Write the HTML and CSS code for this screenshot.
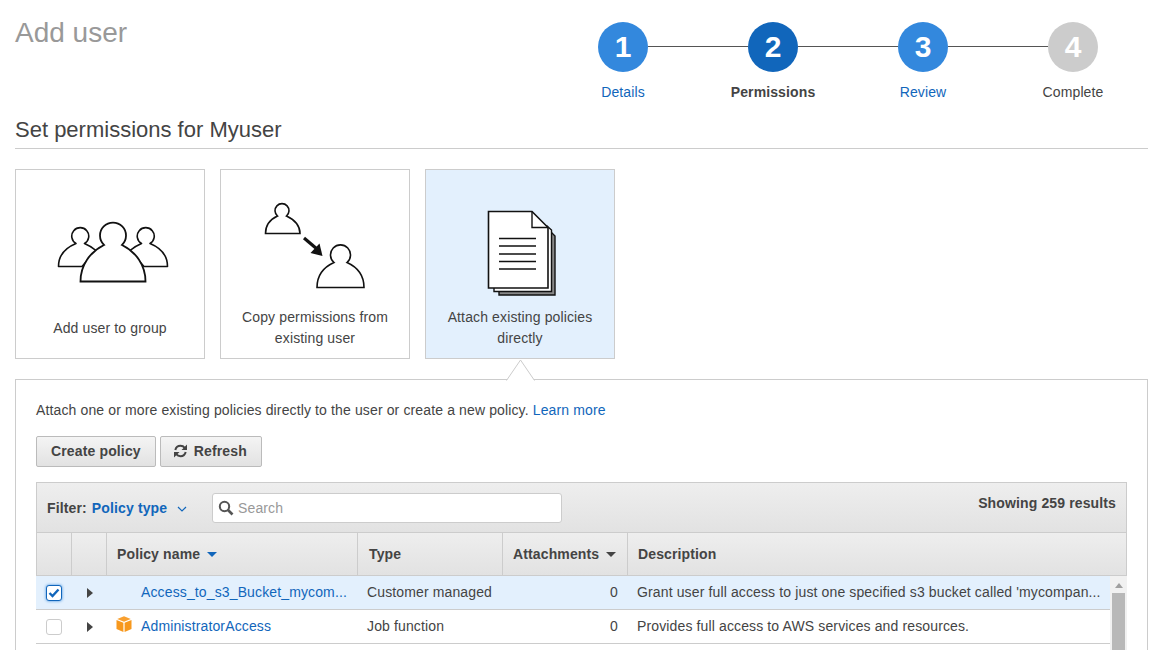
FILE: index.html
```html
<!DOCTYPE html>
<html lang="en">
<head>
<meta charset="utf-8">
<title>Add user</title>
<link rel="stylesheet" href="styles.css">
</head>
<body>
<div class="page">
  <header class="top">
    <h1 class="title">Add user</h1>
    <ol class="steps">
      <li class="step link"><span class="dot">1</span><span class="step-label">Details</span></li>
      <li class="step current"><span class="dot">2</span><span class="step-label">Permissions</span></li>
      <li class="step link"><span class="dot">3</span><span class="step-label">Review</span></li>
      <li class="step todo"><span class="dot">4</span><span class="step-label">Complete</span></li>
    </ol>
  </header>
  <h2 class="section">Set permissions for Myuser</h2>
  <div class="cards">
    <div class="card">
      <div class="card-art card-art-group">
        <svg class="art" width="112" height="62" viewBox="0 0 112 62">
          <path d="M1.500 45.500C1.500 35 8 27 19 22.500A8.500 8.500 0 1 1 27.500 22.500C31 24 35 26 39 29.500L25 45.500Z" fill="#fff" stroke="#111" stroke-width="1.600" stroke-linejoin="round"/>
          <path d="M110.500 45.500C110.500 35 104 27 93 22.500A8.500 8.500 0 1 0 84.500 22.500C81 24 77 26 73 29.500L87 45.500Z" fill="#fff" stroke="#111" stroke-width="1.600" stroke-linejoin="round"/>
          <path d="M23.500 60.500C23.500 44 33 31 47 24A13 13 0 1 1 65 24C79 31 88.500 44 88.500 60.500Z" fill="#fff" stroke="#111" stroke-width="1.800"/>
        </svg>
      </div>
      <p class="card-text">Add user to group</p>
    </div>
    <div class="card">
      <div class="card-art card-art-copy">
        <svg class="art" width="102" height="88" viewBox="0 0 102 88">
          <path d="M1.500 32.500C1.500 24 6 18.500 13.500 15A7 7 0 1 1 22.500 15C30 18.500 36 24 36 32.500Z" fill="#fff" stroke="#111" stroke-width="1.600"/>
          <path d="M53 86.500C53 74 60 66 70 61.500A10 10 0 1 1 83 61.500C93 66 100 74 100 86.500Z" fill="#fff" stroke="#111" stroke-width="1.600"/>
          <path d="M40 37L53 48" fill="none" stroke="#111" stroke-width="3.200"/>
          <path d="M58.500 55L46.500 52L55.500 42.500Z" fill="#111"/>
        </svg>
      </div>
      <p class="card-text">Copy permissions from existing user</p>
    </div>
    <div class="card selected">
      <div class="card-art card-art-doc">
        <svg class="art" width="70" height="86" viewBox="0 0 70 86">
          <path d="M12 85H68V26L60 18H12Z" fill="#888" stroke="#111" stroke-width="1.400"/>
          <path d="M7 81.500H64.500V20L60 16H7Z" fill="#fff" stroke="#111" stroke-width="1.400"/>
          <path d="M1.500 1.500H45L61 17.500V78H1.500Z" fill="#fff" stroke="#111" stroke-width="1.600"/>
          <path d="M45 1.500V17.500H61" fill="none" stroke="#111" stroke-width="1.400"/>
          <path d="M12 28.500H49M12 36H49M12 44H49M12 51.500H49M12 59H49" fill="none" stroke="#111" stroke-width="1.500"/>
        </svg>
      </div>
      <p class="card-text">Attach existing policies directly</p>
    </div>
  </div>
  <section class="panel">
    <svg class="caret" width="32" height="22" viewBox="0 0 32 22"><path d="M0.500 21.500L14.500 1L28.500 21.500" fill="#fff" stroke="#ccc"/></svg>
    <p class="intro">Attach one or more existing policies directly to the user or create a new policy. <a class="lnk" href="#">Learn more</a></p>
    <div class="actions">
      <button class="btn">Create policy</button>
      <button class="btn">
        <svg class="refresh" width="15" height="14" viewBox="0 0 15 14"><path d="M2.300 6C3 3.200 5 1.800 7.500 1.800C9.300 1.800 10.700 2.500 11.800 3.800M12.700 8C12 10.800 10 12.200 7.500 12.200C5.700 12.200 4.300 11.500 3.200 10.200" fill="none" stroke="#444" stroke-width="2"/><path d="M14 0.500V6H8.500ZM1 13.500V8H6.500Z" fill="#444"/></svg>
        Refresh
      </button>
    </div>
    <div class="table">
      <div class="filterbar">
        <span class="filter"><b class="filter-key">Filter:</b> <a class="filter-val" href="#">Policy type</a>
          <svg class="chev" width="10" height="6" viewBox="0 0 10 6"><path d="M1 1L5 5L9 1" fill="none" stroke="#1166bb" stroke-width="1.200"/></svg>
        </span>
        <label class="search">
          <svg width="16" height="16" viewBox="0 0 16 16"><circle cx="6.500" cy="6.500" r="4.700" fill="none" stroke="#555" stroke-width="2"/><path d="M10 10L14.500 14.500" stroke="#555" stroke-width="2.600"/></svg>
          <span class="placeholder">Search</span>
        </label>
        <span class="count">Showing 259 results</span>
      </div>
      <div class="head-cols thead">
        <div class="th"></div>
        <div class="th"></div>
        <div class="th">Policy name <i class="sort blue"></i></div>
        <div class="th th-type">Type</div>
        <div class="th">Attachments <i class="sort"></i></div>
        <div class="th last">Description</div>
      </div>
      <div class="tbody">
        <div class="rows">
          <div class="cols row on">
            <div class="td"><span class="check checked"><svg width="12" height="10" viewBox="0 0 12 10"><path d="M1.500 5L4.500 8L10.500 1.500" fill="none" stroke="#1166bb" stroke-width="2.400"/></svg></span></div>
            <div class="td"><i class="tri"></i></div>
            <div class="td policy"><a class="lnk" href="#">Access_to_s3_Bucket_mycom...</a></div>
            <div class="td">Customer managed</div>
            <div class="td num">0</div>
            <div class="td desc">Grant user full access to just one specified s3 bucket called 'mycompan...</div>
          </div>
          <div class="cols row">
            <div class="td"><span class="check"></span></div>
            <div class="td"><i class="tri"></i></div>
            <div class="td policy"><svg class="box" width="16" height="16" viewBox="0 0 16 16"><path d="M8 0.300L14.800 3L8 5.700L1.200 3Z" fill="#f9a030"/><path d="M0.500 4L7.400 6.800V16L0.500 13ZM15.500 4L8.600 6.800V16L15.500 13Z" fill="#f7981d"/></svg><a class="lnk" href="#">AdministratorAccess</a></div>
            <div class="td">Job function</div>
            <div class="td num">0</div>
            <div class="td desc">Provides full access to AWS services and resources.</div>
          </div>
        </div>
        <div class="scrollbar"><i class="up"></i><i class="thumb"></i></div>
      </div>
    </div>
  </section>
</div>
</body>
</html>
```
FILE: styles.css
```css
* { box-sizing: border-box; }
html, body { margin: 0; height: 650px; overflow: hidden; background: #fff; }
body { font: 14px/20px "Liberation Sans", Arial, sans-serif; letter-spacing: 0.13px; color: #444; }
.page { padding: 0 20px 0 15px; }
a { text-decoration: none; }
.lnk { color: #1166bb; }

.top { display: flex; justify-content: space-between; height: 112px; padding-top: 15px; }
.title { margin: 0; font-size: 28px; line-height: 36px; font-weight: 400; letter-spacing: 0; color: #999; }
.steps { display: flex; margin: 7px 0 0; padding: 0; list-style: none; width: 600px; }
.step { position: relative; width: 150px; display: flex; flex-direction: column; align-items: center; }
.step::after { content: ""; position: absolute; left: 100px; top: 24px; width: 100px; height: 1px; background: #555; }
.step:last-child::after { display: none; }
.dot { width: 50px; height: 50px; border-radius: 50%; color: #fff; font-size: 30px; font-weight: 700; line-height: 50px; text-align: center; letter-spacing: 0; }
.step-label { margin-top: 10px; line-height: 20px; }
.link .dot { background: #3388dd; }
.link .step-label { color: #1166bb; }
.current .dot { background: #1166bb; }
.current .step-label { font-weight: 700; letter-spacing: 0.12px; }
.todo .dot { background: #ccc; }

.section { margin: 0; font-size: 22px; line-height: 36px; font-weight: 400; letter-spacing: 0; border-bottom: 1px solid #ccc; height: 37px; }

.cards { display: flex; gap: 15px; margin-top: 20px; }
.card { width: 190px; height: 190px; border: 1px solid #ccc; display: flex; flex-direction: column; align-items: center; padding: 0 15px; text-align: center; }
.card.selected { background: #e3f0fd; }
.card-art { display: flex; justify-content: center; }
.card-art-group { height: 148px; padding-top: 51px; margin-left: 6px; }
.card-art-copy { height: 137px; padding-top: 31px; }
.card-art-doc { height: 137px; padding-top: 40px; margin-left: 4px; }
.art { display: block; flex: none; }
.card-text { margin: 0; line-height: 21px; }

.panel { position: relative; margin-top: 20px; border: 1px solid #ccc; padding: 20px; height: 300px; }
.caret { position: absolute; top: -21px; left: 490px; }
.intro { margin: 0; line-height: 20px; }
.actions { display: flex; gap: 4px; margin-top: 16px; }
.btn { height: 31px; padding: 0 14px 2px; border: 1px solid #bbb; border-radius: 2px; background: linear-gradient(#f4f4f4, #e2e2e2); font: 700 14px "Liberation Sans", Arial, sans-serif; letter-spacing: 0.14px; color: #444; display: flex; align-items: center; gap: 6px; }
.btn .refresh { flex: none; margin-left: -2px; margin-top: 1px; }

.table { margin-top: 15px; }
.filterbar { height: 51px; border: 1px solid #ccc; background: linear-gradient(#eee, #e2e2e2); display: flex; padding: 10px 10px 0; }
.filter { width: 165px; line-height: 30px; white-space: nowrap; }
.filter-val { color: #1166bb; font-weight: 700; margin-left: 1px; }
.chev { margin-left: 6px; vertical-align: 1px; }
.search { width: 350px; height: 30px; background: #fff; border: 1px solid #ccc; border-radius: 3px; display: flex; align-items: center; gap: 4px; padding-left: 5px; color: #999; }
.count { margin-left: auto; font-weight: 700; line-height: 20px; }

.head-cols { display: grid; grid-template-columns: 35px 35px 251px 145px 125px 1fr; }
.cols { display: grid; grid-template-columns: 36px 35px 251px 145px 125px 1fr; }
.thead { height: 43px; background: linear-gradient(#eee, #e2e2e2); border: 1px solid #ccc; border-top: 0; font-weight: 700; }
.th { border-right: 1px solid #ccc; padding: 0 10px; line-height: 42px; white-space: nowrap; }
.th-type { padding-left: 11px; }
.th.last { border-right: 0; }
.sort { display: inline-block; width: 0; height: 0; margin: 0 0 2px 3px; border: 5px solid transparent; border-top-color: #444; border-bottom: 0; }
.sort.blue { border-top-color: #1166bb; }

.tbody { display: flex; height: 100px; }
.rows { flex: 1; min-width: 0; }
.row { height: 34px; border-bottom: 1px solid #ccc; }
.row.on { background: #e3f0fd; }
.td { padding: 0 9px; line-height: 33px; white-space: nowrap; overflow: hidden; display: flex; align-items: center; }
.num { justify-content: flex-end; padding-right: 10px; }
.policy { padding-left: 34px; position: relative; }
.box { position: absolute; left: 9px; top: 6px; }
.check { width: 16px; height: 16px; margin-left: 1px; border: 1px solid #ccc; border-radius: 3px; background: #fff; display: flex; align-items: center; justify-content: center; flex: none; }
.check.checked { border: 1px solid #1166bb; box-shadow: 0 0 3px #3388dd; }
.tri { display: block; width: 0; height: 0; margin-left: 6px; border: 5px solid transparent; border-left: 6px solid #444; border-right: 0; }
.scrollbar { width: 17px; background: #f1f1f1; display: flex; flex-direction: column; align-items: center; }
.up { display: block; width: 0; height: 0; margin-top: 7px; border: 4px solid transparent; border-bottom: 5px solid #a0a0a0; border-top: 0; }
.thumb { display: block; width: 13px; flex: 1; margin-top: 5px; background: #b8b8b8; }
```
